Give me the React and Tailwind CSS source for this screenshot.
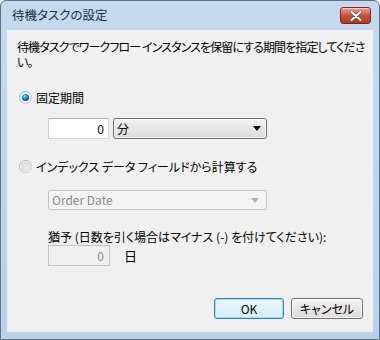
import React from "react";

const jp = "font-['Meiryo_UI','Noto_Sans_CJK_JP',sans-serif] [font-feature-settings:'palt']";

function Radio({ checked }) {
  return (
    <svg width="13" height="13" viewBox="0 0 13 13" className="shrink-0">
      <defs>
        <linearGradient id={checked ? "rimOn" : "rimOff"} x1="0" y1="0" x2="1" y2="1">
          <stop offset="0" stopColor={checked ? "#8ea0b3" : "#a9a9a9"} />
          <stop offset="1" stopColor={checked ? "#c9d2db" : "#d6d6d6"} />
        </linearGradient>
        <radialGradient id="dotOn" cx="0.4" cy="0.35" r="0.7">
          <stop offset="0" stopColor="#8fe0ff" />
          <stop offset="0.45" stopColor="#1b8fd8" />
          <stop offset="1" stopColor="#0b3f7a" />
        </radialGradient>
        <linearGradient id="inOff" x1="0" y1="0" x2="1" y2="1">
          <stop offset="0" stopColor="#d8d8d8" />
          <stop offset="1" stopColor="#f6f6f6" />
        </linearGradient>
      </defs>
      <circle cx="6.5" cy="6.5" r="6" fill="#f4f4f4" stroke={`url(#${checked ? "rimOn" : "rimOff"})`} strokeWidth="1" />
      {checked ? (
        <circle cx="6.5" cy="6.5" r="3.6" fill="url(#dotOn)" />
      ) : (
        <circle cx="6.5" cy="6.5" r="4" fill="url(#inOff)" stroke="#c8c8c8" strokeWidth="0.6" />
      )}
    </svg>
  );
}

function Arrow({ color }) {
  return (
    <svg width="8" height="5" viewBox="0 0 8 5">
      <path d="M0 0 H8 L4 5 Z" fill={color} />
    </svg>
  );
}

function CloseButton() {
  return (
    <div className="flex h-[17px] w-[31px] items-center justify-center rounded-[3px] border border-[#7a2a22] bg-gradient-to-b from-[#e8a495] via-[#c8523c] to-[#b33620] shadow-[inset_0_1px_0_rgba(255,255,255,0.5)]">
      <svg width="12" height="10" viewBox="0 0 12 10">
        <path d="M1.5 1 L10.5 9 M10.5 1 L1.5 9" stroke="#5a4a4a" strokeWidth="3.4" strokeLinecap="round" />
        <path d="M1.5 1 L10.5 9 M10.5 1 L1.5 9" stroke="#ffffff" strokeWidth="2" strokeLinecap="round" />
      </svg>
    </div>
  );
}

export default function App() {
  return (
    <div className={`flex h-[340px] w-[380px] flex-col rounded-t-[6px] border border-[#5f7388] bg-gradient-to-b from-[#c6d9ee] to-[#b9d1ea] ${jp}`}>
      <div className="flex h-[29px] shrink-0 items-center justify-between pl-[11px] pr-[8px]">
        <span className="text-[12.5px] text-[#1e2f44]">待機タスクの設定</span>
        <CloseButton />
      </div>

      <div className="mx-[6px] mb-[7px] flex flex-1 flex-col bg-[#f0f0f0] pl-[10px] text-[12px] text-black">
        <p className="mt-[9px] w-[354px] leading-[15px] tracking-[-0.9px]">
          待機タスクでワークフロー インスタンスを保留にする期間を指定してください。
        </p>

        <label className="mt-[21px] flex items-center gap-[4px] leading-[15px]">
          <span className="ml-[2px]"><Radio checked /></span>
          <span>固定期間</span>
        </label>

        <div className="mt-[13px] ml-[31px] flex items-center gap-[4px]">
          <div className="flex h-[21px] w-[61px] items-center justify-end border border-[#d5d5d5] border-t-[#abadb3] bg-white pr-[4px] text-[12px] leading-none">
            0
          </div>
          <div className="flex h-[21px] w-[154px] items-center justify-between rounded-[3px] border border-[#707070] bg-gradient-to-b from-[#f2f2f2] to-[#dcdcdc] pl-[3px] pr-[5px] shadow-[inset_0_0_0_1px_rgba(255,255,255,0.7)]">
            <span className="text-[12px] leading-none">分</span>
            <Arrow color="#000000" />
          </div>
        </div>

        <label className="mt-[20px] flex items-center gap-[4px] leading-[15px]">
          <span className="ml-[2px]"><Radio checked={false} /></span>
          <span>インデックス データ フィールドから計算する</span>
        </label>

        <div className="mt-[16px] ml-[31px] flex h-[20px] w-[219px] items-center justify-between rounded-[2px] border border-[#c4c4c4] bg-[#f4f4f4] pl-[3px] pr-[7px]">
          <span className="text-[12px] leading-none text-[#8a8a8a]">Order Date</span>
          <Arrow color="#b0b0b0" />
        </div>

        <p className="mt-[19px] ml-[31px] leading-[15px]">猶予 (日数を引く場合はマイナス (-) を付けてください):</p>

        <div className="mt-[1px] ml-[31px] flex items-center">
          <div className="flex h-[21px] w-[62px] items-center justify-end border border-[#c4c4c4] bg-[#f0f0f0] pr-[5px] text-[12px] leading-none text-[#8a8a8a]">
            0
          </div>
          <span className="ml-[14px] text-[13px]">日</span>
        </div>

        <div className="mt-auto mb-[13px] flex justify-end gap-[7px] pr-[10px]">
          <button className="h-[21px] w-[70px] rounded-[3px] border border-[#3c7fb1] bg-gradient-to-b from-[#eaf6fd] to-[#d9eefa] text-[12px] leading-none shadow-[inset_0_0_0_1px_#9fdcf9]">
            OK
          </button>
          <button className="h-[21px] w-[72px] rounded-[3px] border border-[#707070] bg-gradient-to-b from-[#f2f2f2] to-[#dddddd] text-[12px] leading-none shadow-[inset_0_0_0_1px_rgba(255,255,255,0.7)]">
            キャンセル
          </button>
        </div>
      </div>
    </div>
  );
}
